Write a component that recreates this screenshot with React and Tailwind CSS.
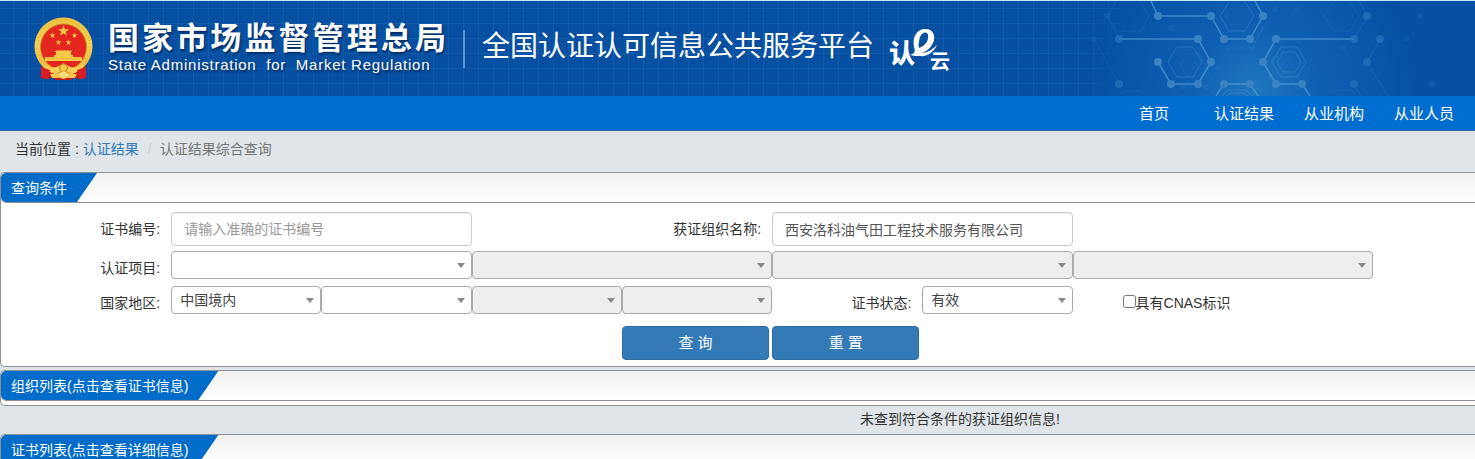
const navItems = ['首页', '认证结果', '从业机构', '从业人员'];

const brightNodes = [
  [98, 15], [151, 15], [203, 15], [138, 38], [164, 38], [190, 38], [216, 38],
  [98, 61], [151, 61], [203, 61], [111, 83], [138, 83], [164, 83], [190, 83],
  [216, 83], [242, 83],
];

const dimNodes = [
  [59, 38], [294, 38], [307, 15], [320, 38], [307, 61], [59, 83], [294, 83],
];

const faintNodes = [
  [47, 15], [34, 38], [215, 8], [237, 8], [203, 27], [169, 47], [192, 47],
  [158, 67], [123, 86], [146, 86], [111, 27], [237, 86], [283, 47], [347, 38],
  [360, 15], [372, 83],
];

function Emblem() {
  return (
    <svg viewBox="0 0 59 64" className="h-[64px] w-[59px] shrink-0" aria-hidden="true">
      <defs>
        <linearGradient id="gold" x1="0" y1="0" x2="0" y2="1">
          <stop offset="0" stopColor="#f0c040" />
          <stop offset="0.5" stopColor="#f6d45a" />
          <stop offset="1" stopColor="#e8a92a" />
        </linearGradient>
        <path id="star" d="M0-5 1.2-1.6 4.8-1.6 1.9.6 3 4 0 1.9-3 4-1.9.6-4.8-1.6-1.2-1.6Z" />
      </defs>
      <path d="M8 46 51 46 52 61 44 62 41 60 37 63 22 63 18 60 15 62 7 61Z" fill="#c8161d" />
      <circle cx="29.500" cy="29.500" r="29" fill="url(#gold)" />
      <circle cx="29.500" cy="29.500" r="26" fill="none" stroke="#e0a52c" strokeOpacity="0.6" strokeWidth="2" strokeDasharray="1 2" />
      <circle cx="29.500" cy="30" r="23" fill="#e5251f" stroke="#c98a1c" strokeWidth="1" />
      <g fill="#f7c948">
        <use href="#star" transform="translate(29.500 14) scale(1.150)" />
        <use href="#star" transform="translate(18.500 18.500) scale(.6)" />
        <use href="#star" transform="translate(40.500 18.500) scale(.6)" />
        <use href="#star" transform="translate(24.500 25.500) scale(.6)" />
        <use href="#star" transform="translate(34.500 25.500) scale(.6)" />
        <path d="M21 35 22 33.500 37 33.500 38 35 37 35 37 38 39 38 39 40 48 40 48 44 11 44 11 40 20 40 20 38 22 38 22 35Z" />
      </g>
      <path d="M12 41.500H47" stroke="#d89a2c" strokeWidth="0.500" />
      <path d="M8 43C14 53 22 52 29.500 46 37 52 45 53 51 43L48 52 38 57 29.500 52 21 57 11 52Z" fill="#f6cf57" />
      <path d="M7 50 16 53 14 62 7 61ZM52 50 43 53 45 62 52 61Z" fill="#d81e22" />
      <circle cx="29.500" cy="51" r="4" fill="#f3c64e" stroke="#c98a1c" strokeWidth="1" />
      <path d="M16 57 25 57 29.500 60 34 57 43 57 41 61 33 61 29.500 62 26 61 18 61Z" fill="#f3c64e" />
      <path d="M24 58 29.500 54 35 58 29.500 61Z" fill="#fbe08a" />
    </svg>
  );
}

function CloudLogo() {
  return (
    <svg viewBox="-5 -8 74 58" className="h-[58px] w-[74px] shrink-0" fill="#fff" role="img" aria-label="认e云">
      <text x="0" y="35" fontSize="26" fontWeight="900" fontFamily="'Noto Sans CJK SC', sans-serif">认</text>
      <text x="41" y="41" fontSize="20" fontWeight="700" fontFamily="'Noto Sans CJK SC', sans-serif">云</text>
      <path
        fillRule="evenodd"
        d="M21 27C25 26 27 24 25 19 23 9 28 1 36 1 45 1 47 9 44 15 42 20 37 24 32 25 38 25 43 22 48 17 45 24 38 29 31 28 28 28 24 28 21 27ZM30 20C36 18 40 13 39 7 38 3 33 4 31 9 30 13 29 17 30 20Z"
      />
    </svg>
  );
}

function Molecules() {
  return (
    <svg viewBox="0 0 415 95" className="absolute top-0 right-0 h-[95px] w-[415px]" aria-hidden="true">
      <defs>
        <radialGradient id="glow" gradientUnits="userSpaceOnUse" cx="195" cy="90" r="180">
          <stop offset="0" stopColor="#1f78bd" />
          <stop offset="0.35" stopColor="#0f5fb2" />
          <stop offset="0.75" stopColor="#0854a7" />
          <stop offset="1" stopColor="#074fa0" stopOpacity="0" />
        </radialGradient>
      </defs>
      <rect x="66" width="349" height="95" fill="#074fa0" />
      <rect width="415" height="95" fill="url(#glow)" />
      <g fill="none" stroke="#5a9ed6" strokeOpacity="0.35">
        <path d="M160 15 169 1M194 15 185 1M160 15 169 30 185 30 194 15" />
        <path d="M108 61 117 46 133 46 142 61 133 76 117 76Z" />
        <path d="M212 61 221 46 237 46 246 61 237 76 221 76Z" />
        <path d="M217 61 223 51 235 51 241 61 235 71 223 71Z" />
        <path d="M162 95 168 89 186 89 192 95M166 95 171 92 183 92 188 95" />
      </g>
      <g fill="none" stroke="#4a92d0" strokeOpacity="0.18">
        <path d="M264 15 273 1M264 15 273 30 290 30 299 15 290 1" />
        <path d="M56 1 48 15 57 30 81 30 89 15 81 1" />
        <path d="M120 64 127 53 139 53 145 64 139 75 127 75Z" />
        <path d="M158 67 146 86 123 86M169 47 192 47 203 27M203 27 195 42M264 95 273 89 290 89 299 95" />
        <path d="M34 38 59 83M47 15 59 38M56 95 65 90 80 90 88 95" />
      </g>
      <g fill="none" stroke="#62a9dc" strokeOpacity="0.6" strokeWidth="1.500">
        <path d="M91 0 98 15 151 15 164 38 190 38 203 15 195 0" />
        <path d="M59 38 138 38 151 61 138 83 111 83 98 61" />
        <path d="M294 38 216 38 203 61 216 83 242 83 250 95" />
        <path d="M156 95 164 83 190 83 198 95" />
      </g>
      <path d="M299 0 307 15 294 38M294 83 301 95M320 38 307 61 328 95" fill="none" stroke="#3b88cc" strokeOpacity="0.3" />
      <g fill="#3a82c4">
        {brightNodes.map(([x, y]) => <circle key={`${x}-${y}`} cx={x} cy={y} r="4" />)}
      </g>
      <g fill="#2a78c0" fillOpacity="0.6">
        {dimNodes.map(([x, y]) => <circle key={`${x}-${y}`} cx={x} cy={y} r="4" />)}
      </g>
      <g fill="#2f80c8" fillOpacity="0.2">
        {faintNodes.map(([x, y]) => <circle key={`${x}-${y}`} cx={x} cy={y} r="3" />)}
      </g>
    </svg>
  );
}

function Select({ id, label, options = [''], disabled, className = '' }) {
  return (
    <div className={`relative ${className}`}>
      <select
        id={id}
        aria-label={label}
        disabled={disabled}
        className="block h-7 w-full appearance-none rounded border border-[#aaa] bg-white pr-5 pl-2 text-sm leading-6 text-[#444] opacity-100 disabled:bg-[#eee]"
      >
        {options.map((o) => <option key={o}>{o}</option>)}
      </select>
      <svg viewBox="0 0 8 5" className="pointer-events-none absolute top-3 right-[7px] h-[5px] w-2" aria-hidden="true">
        <path d="M0 0H8L4 5Z" fill="#888" />
      </svg>
    </div>
  );
}

function Panel({ title, children }) {
  return (
    <section className="rounded-l-[5px] border border-r-0 border-[#8e9092] bg-white">
      <div className="flex h-[30px] rounded-l-[5px] border-b border-[#8e9092] bg-linear-to-b from-[#f1f1f1] to-white">
        <h2 className="rounded-l-[5px] bg-[#006cc9] pr-[30px] pl-[10px] text-sm leading-[30px] text-white [clip-path:polygon(0_0,100%_0,calc(100%-20px)_100%,0_100%)]">
          {title}
        </h2>
      </div>
      {children}
    </section>
  );
}

const labelClass = 'pt-[7px] pr-[11px] text-right leading-5';
const inputClass =
  'h-[34px] w-full rounded border border-[#ccc] bg-white px-3 text-sm text-[#555] shadow-[inset_0_1px_1px_rgba(0,0,0,0.075)] placeholder:text-[#999]';
const buttonClass =
  'mr-[3px] h-[34px] rounded border border-[#2e6da4] bg-[#337ab7] text-[15px] text-white';
const rowClass = 'grid grid-cols-9 items-start pr-[102px] pl-5';

export default function App() {
  return (
    <div className="h-screen overflow-hidden bg-[#e0e5e9] font-['Liberation_Sans','Noto_Sans_CJK_SC',sans-serif] text-sm text-[#333]">
      <header className="relative flex h-24 items-center border-t border-[#c4ecf6] bg-[#074fa0] bg-[linear-gradient(to_right,#0e5aab_1px,transparent_1px),linear-gradient(to_bottom,#0e5aab_1px,transparent_1px)] bg-size-[15px_15px] bg-position-[13px_7px] pl-[34px] text-white">
        <Molecules />
        <Emblem />
        <div className="ml-[15px] text-shadow-[1px_2px_2px_rgba(0,20,60,0.6)]">
          <h1 className="text-[31px] leading-8 font-bold tracking-widest">国家市场监督管理总局</h1>
          <p className="text-[15px] leading-5 tracking-wider whitespace-pre">State Administration  for  Market Regulation</p>
        </div>
        <div className="ml-[14px] h-[38px] w-[2px] bg-[#5c95d2]" />
        <div className="ml-[17px] pb-1 text-[28px] leading-10">全国认证认可信息公共服务平台</div>
        <div className="ml-[10px]">
          <CloudLogo />
        </div>
      </header>

      <nav className="flex h-[35px] justify-end border-b border-[#1f62a8] bg-[#006dd0] pr-[6px] text-[15px] leading-9 text-white">
        {navItems.map((item) => (
          <a key={item} href="#" className="w-[90px] text-center">{item}</a>
        ))}
      </nav>

      <div className="flex h-[41px] items-center pb-[5px] pl-[15px]">
        <span className="mr-1">当前位置 :</span>
        <a href="#" className="text-[#337ab7]">认证结果</a>
        <span className="mr-2 ml-[9px] text-[#ccc]">/</span>
        <span className="text-[#777]">认证结果综合查询</span>
      </div>

      <Panel title="查询条件">
        <form className="pt-[9px] pb-[6px]" onSubmit={(e) => e.preventDefault()}>
          <div className={`${rowClass} mb-[5px]`}>
            <label htmlFor="certNo" className={labelClass}>证书编号:</label>
            <input id="certNo" className={`${inputClass} col-span-2`} placeholder="请输入准确的证书编号" />
            <label htmlFor="orgName" className={`${labelClass} col-span-2`}>获证组织名称:</label>
            <input id="orgName" className={`${inputClass} col-span-2`} defaultValue="西安洛科油气田工程技术服务有限公司" />
          </div>

          <div className={`${rowClass} mb-[7px]`}>
            <label htmlFor="project" className={labelClass}>认证项目:</label>
            <Select id="project" className="col-span-2" />
            <Select label="认证项目二级" className="col-span-2" disabled />
            <Select label="认证项目三级" className="col-span-2" disabled />
            <Select label="认证项目四级" className="col-span-2" disabled />
          </div>

          <div className={`${rowClass} mb-3`}>
            <label htmlFor="country" className={labelClass}>国家地区:</label>
            <Select id="country" options={['中国境内']} />
            <Select label="省" />
            <Select label="市" disabled />
            <Select label="区县" disabled />
            <label htmlFor="status" className={labelClass}>证书状态:</label>
            <Select id="status" options={['有效']} />
            <label className="col-span-2 flex items-center pt-[7px] pl-[50px] leading-5">
              <input type="checkbox" className="mb-1 size-[13px]" />
              具有CNAS标识
            </label>
          </div>

          <div className={rowClass}>
            <button type="submit" className={`${buttonClass} col-start-5`}>查 询</button>
            <button type="reset" className={buttonClass}>重 置</button>
          </div>
        </form>
      </Panel>

      <div className="mt-[3px]">
        <Panel title="组织列表(点击查看证书信息)">
          <div className="h-1" />
        </Panel>
      </div>

      <p className="h-7 pl-[445px] text-center leading-[26px]">未查到符合条件的获证组织信息!</p>

      <Panel title="证书列表(点击查看详细信息)">
        <div className="h-1" />
      </Panel>
    </div>
  );
}
